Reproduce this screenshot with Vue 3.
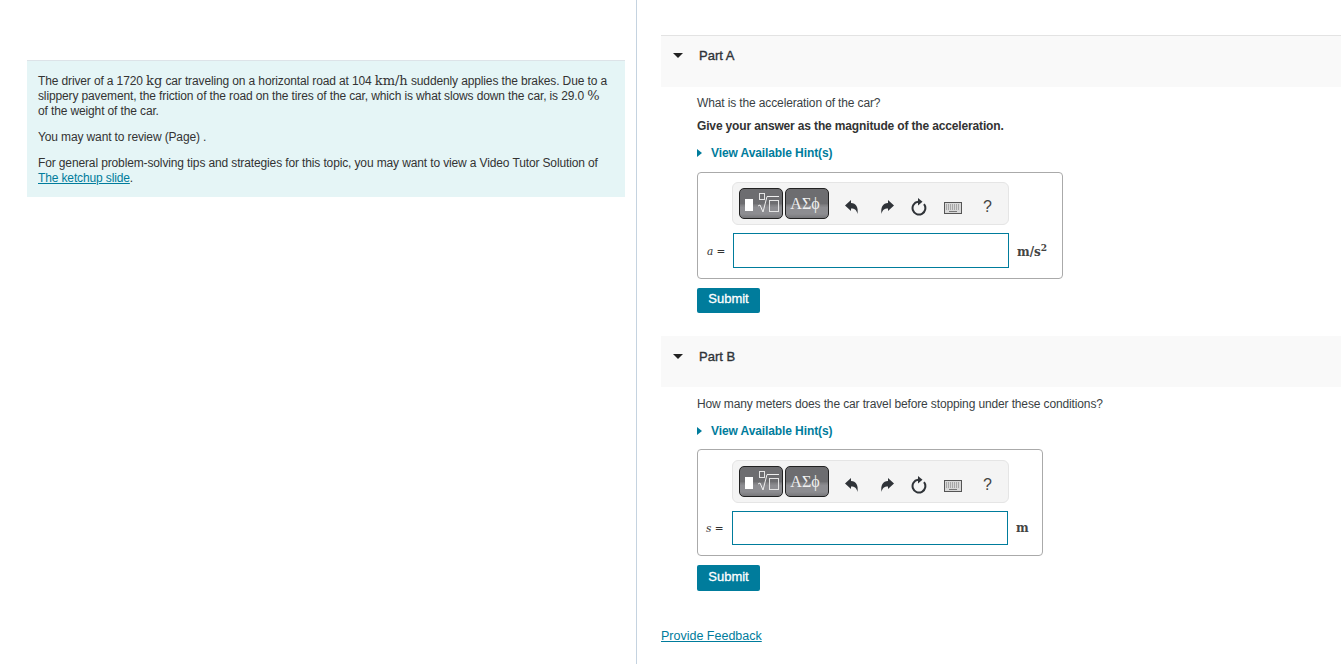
<template>
  <div class="page">
    <section class="left">
      <div class="intro">
        <p class="first">The driver of a 1720 <span class="m">kg</span> car traveling on a horizontal road at 104 <span class="m">km/h</span> suddenly applies the brakes. Due to a slippery pavement, the friction of the road on the tires of the car, which is what slows down the car, is 29.0 <span class="m">%</span> of the weight of the car.</p>
        <p>You may want to review (Page) .</p>
        <p>For general problem-solving tips and strategies for this topic, you may want to view a Video Tutor Solution of <a href="#">The ketchup slide</a>.</p>
      </div>
    </section>
    <section class="right">
      <div class="part" v-for="part in parts" :key="part.name" :class="part.cls">
        <header class="part-head">
          <span class="caret"></span>
          <span class="part-name">{{ part.name }}</span>
        </header>
        <div class="part-body">
          <p class="q">{{ part.question }}</p>
          <p v-if="part.note" class="note">{{ part.note }}</p>
          <div class="hint"><span class="hint-caret"></span>View Available Hint(s)</div>
          <div class="answer" :style="{ width: part.width + 'px' }">
            <div class="toolbar">
              <div class="tmpl first">
                <span class="blk"></span>
                <svg class="root" width="26" height="24" viewBox="0 0 26 24">
                  <rect x="4.5" y="1.5" width="5" height="6" fill="none" stroke="#e4e4e4" />
                  <path d="M3 14 L5 13 L8 20 L12 4.5 H24" fill="none" stroke="#eee" stroke-width="1" />
                  <rect x="14.5" y="8.5" width="9" height="11" fill="none" stroke="#e4e4e4" />
                </svg>
              </div>
              <div class="tmpl sym">ΑΣϕ</div>
              <div class="tools">
                <svg class="tool" width="18" height="18" viewBox="0 0 18 18"><path d="M2 7.5 L8 2 V5 C13 5 15.5 9 14.5 16 C13.5 12 12 10.5 8 10.5 V13 Z" fill="#2f3338" /></svg>
                <svg class="tool" width="18" height="18" viewBox="0 0 18 18"><path d="M16 7.5 L10 2 V5 C5 5 2.5 9 3.5 16 C4.5 12 6 10.5 10 10.5 V13 Z" fill="#2f3338" /></svg>
                <svg class="tool" width="18" height="18" viewBox="0 0 18 18"><path d="M8 3.8 A6.4 6.4 0 1 0 14 6.2" fill="none" stroke="#2f3338" stroke-width="2" /><path d="M8 0 L12.5 3.8 L8 7.4 Z" fill="#2f3338" /></svg>
                <svg class="tool key" width="18" height="12" viewBox="0 0 18 12"><rect x=".5" y=".5" width="17" height="11" fill="#d8d8d8" stroke="#555" /><path d="M2 3h14M2 5h14M2 7h14" stroke="#777" stroke-dasharray="1 1" /><path d="M5 9.5h8" stroke="#777" /></svg>
                <span class="help">?</span>
              </div>
            </div>
            <div class="input-row">
              <span class="var"><i>{{ part.varName }}</i> =</span>
              <div class="input"></div>
              <span class="unit" v-html="part.unit"></span>
            </div>
          </div>
          <button class="submit">Submit</button>
        </div>
      </div>
      <a class="feedback" href="#">Provide Feedback</a>
    </section>
  </div>
</template>

<script setup>
const parts = [
  {
    name: 'Part A',
    cls: 'a',
    question: 'What is the acceleration of the car?',
    note: 'Give your answer as the magnitude of the acceleration.',
    width: 366,
    varName: 'a',
    unit: 'm/s<sup>2</sup>'
  },
  {
    name: 'Part B',
    cls: 'b',
    question: 'How many meters does the car travel before stopping under these conditions?',
    note: '',
    width: 346,
    varName: 's',
    unit: 'm'
  }
]
</script>

<style>
html, body { margin: 0; background: #fff; }
</style>

<style scoped>
.page {
  display: flex;
  width: 1341px;
  height: 664px;
  overflow: hidden;
  font-family: "Liberation Sans", Arial, sans-serif;
  font-size: 12px;
  letter-spacing: -.13px;
  color: #333;
}
.left {
  box-sizing: border-box;
  width: 637px;
  height: 664px;
  padding: 60px 11px 0 27px;
  border-right: 1px solid #c5d3e0;
}
.intro {
  box-sizing: border-box;
  width: 598px;
  height: 137px;
  padding: 13px 14px 0 11px;
  background: #e5f5f6;
  border-top: 1px solid #dde3e8;
  line-height: 15px;
}
.intro p { margin: 0 0 11px; }
.m {
  font-family: "DejaVu Serif", "Liberation Serif", serif;
  font-size: 13px;
  line-height: 0;
  letter-spacing: 0;
}
a { color: #007c9c; text-decoration: underline; }
.right {
  flex: 1;
  padding: 35px 0 0 24px;
}
.part-head {
  display: flex;
  align-items: flex-start;
  height: 51px;
  background: #f9f9f9;
  border-top: 1px solid #e3e3e3;
  padding-left: 12px;
}
.part.b .part-head { border-top: 0; }
.caret {
  width: 0;
  height: 0;
  border-left: 5px solid transparent;
  border-right: 5px solid transparent;
  border-top: 5px solid #222;
  margin-right: 16px;
  margin-top: 17px;
}
.part.b .caret { margin-top: 18px; }
.part-name {
  font-size: 13px;
  line-height: 15px;
  color: #2f3338;
  margin-top: 12px;
  letter-spacing: 0;
  -webkit-text-stroke: .35px #2f3338;
}
.part.b .part-name { margin-top: 13px; }
.part-body { padding: 9px 0 0 36px; }
.part.b .part-body { padding-top: 10px; }
.q { margin: 0; line-height: 15px; color: #3a3f44; }
.note { margin: 8px 0 0; line-height: 15px; font-weight: 700; letter-spacing: -.15px; }
.hint {
  display: flex;
  align-items: center;
  margin-top: 11px;
  height: 15px;
  font-weight: 700;
  color: #007c9c;
  letter-spacing: -.1px;
}
.hint-caret {
  width: 0;
  height: 0;
  border-top: 4px solid transparent;
  border-bottom: 4px solid transparent;
  border-left: 5px solid #007c9c;
  margin-right: 9px;
}
.answer {
  box-sizing: border-box;
  margin-top: 12px;
  height: 107px;
  border: 1px solid #aaa;
  border-radius: 4px;
  padding: 9px 0 0 35px;
}
.part.b .answer { margin-top: 11px; padding: 10px 0 0 34px; }
.toolbar {
  box-sizing: border-box;
  display: flex;
  align-items: center;
  width: 277px;
  height: 43px;
  margin-left: -1px;
  padding: 0 0 0 6px;
  background: #f4f4f4;
  border: 1px solid #e5e5e5;
  border-radius: 6px;
}
.part.b .toolbar { margin-left: 0; }
.tmpl {
  box-sizing: border-box;
  display: flex;
  align-items: center;
  width: 44px;
  height: 31px;
  padding-left: 5px;
  border: 1px solid #222;
  border-radius: 5px;
  background: linear-gradient(#6d6d70 0 50%, #7f7f82 56%, #8d8d91 64% 86%, #77777a 100%);
}
.first { margin-right: 2px; }
.blk { display: block; width: 8px; height: 12px; background: #fff; margin-top: 2px; flex: none; }
.root { margin-left: 2px; flex: none; }
.sym {
  justify-content: center;
  padding: 0 4px 0 0;
  color: #f0f0f0;
  font-family: "Liberation Serif", serif;
  font-size: 16px;
  letter-spacing: 0;
}
.tools { display: flex; align-items: center; margin-top: 6px; }
.tool { flex: none; }
.tools > :nth-child(1) { margin-left: 14px; }
.tools > :nth-child(2) { margin-left: 17px; }
.tools > :nth-child(3) { margin-left: 14px; }
.tools > :nth-child(4) { margin-left: 16px; margin-top: 3px; }
.help { margin-left: 21px; font-size: 16px; line-height: 18px; color: #444; }
.input-row { display: flex; align-items: center; height: 35px; margin-top: 8px; position: relative; }
.part.b .input-row { height: 34px; }
.var {
  position: absolute;
  left: -26px;
  font-family: "DejaVu Serif", "Liberation Serif", serif;
  font-size: 10.5px;
  letter-spacing: 0;
  color: #333;
}
.input {
  box-sizing: border-box;
  width: 276px;
  height: 100%;
  border: 1px solid #007c9c;
  background: #fff;
  flex: none;
}
.unit {
  margin: 2px 0 0 8px;
  font-family: "DejaVu Serif", "Liberation Serif", serif;
  font-size: 12px;
  font-weight: 700;
  color: #444;
  letter-spacing: 0;
  white-space: nowrap;
}
.part.b .unit { margin-top: 0; }
.unit :deep(sup) { font-size: 9px; line-height: 0; vertical-align: 5px; }
.submit {
  display: block;
  box-sizing: border-box;
  width: 63px;
  height: 25px;
  margin-top: 9px;
  padding: 0 0 4px;
  background: #007c9c;
  color: #fff;
  border: 0;
  border-radius: 2px;
  font-family: inherit;
  font-size: 13px;
  letter-spacing: 0;
  -webkit-text-stroke: .3px #fff;
}
.part.b .submit { height: 26px; }
.part.b { margin-top: 23px; }
.feedback {
  display: block;
  margin-top: 38px;
  font-size: 12.5px;
  letter-spacing: 0;
  width: max-content;
}
</style>
